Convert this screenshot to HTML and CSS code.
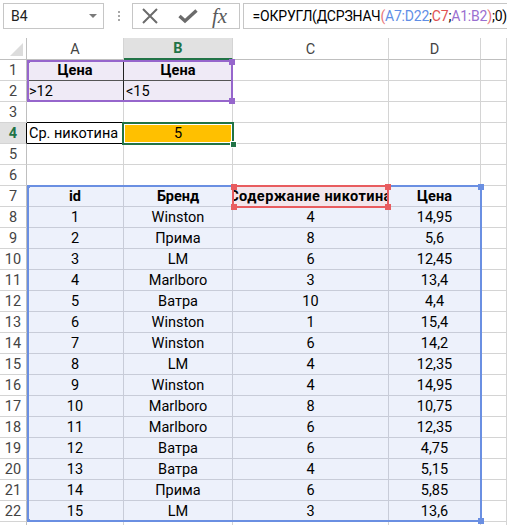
FILE: index.html
```html
<!DOCTYPE html>
<html lang="ru">
<head>
  <meta charset="UTF-8">
  <title>Средний никотин</title>
  <link rel="stylesheet" href="styles.css">
</head>
<body>

  <div class="formula-bar">
    <div class="name-box">
      <span class="name">B4</span>
      <span class="caret"></span>
    </div>
    <div class="grip"><i></i><i></i><i></i></div>
    <div class="buttons">
      <svg class="btn-x" width="18" height="16" viewBox="0 0 18 16">
        <path d="M2 1 L16 15 M16 1 L2 15" stroke="#6b6b6b" stroke-width="2" fill="none"/>
      </svg>
      <svg class="btn-ok" width="20" height="16" viewBox="0 0 20 16">
        <path d="M1.5 8 L7 13 L18.5 2.5" stroke="#6b6b6b" stroke-width="3.4" fill="none"/>
      </svg>
      <span class="fx">fx</span>
    </div>
    <div class="formula">=ОКРУГЛ(ДСРЗНАЧ<span class="paren">(</span><span class="ref-blue">A7:D22</span>;<span class="ref-red">C7</span>;<span class="ref-purple">A1:B2</span><span class="paren">)</span>;0)</div>
  </div>

  <div class="sheet">
    <div class="grid" id="grid"></div>

    <!-- range highlights drawn over the cells -->
    <div class="range range-purple">
      <span class="handle small tl"></span>
      <span class="handle tr"></span>
      <span class="handle small bl"></span>
      <span class="handle br"></span>
    </div>
    <div class="range range-blue">
      <span class="handle small tl"></span>
      <span class="handle tr"></span>
      <span class="handle small bl"></span>
      <span class="handle br"></span>
    </div>
    <div class="range range-red">
      <span class="handle tl"></span>
      <span class="handle tr"></span>
      <span class="handle bl"></span>
      <span class="handle br"></span>
    </div>
    <div class="active-cell"><span class="fill-handle"></span></div>
  </div>

  <script>
    const columns = ["A", "B", "C", "D", "E"];

    const data = [
      [1, "Winston", 4, "14,95"],
      [2, "Прима", 8, "5,6"],
      [3, "LM", 6, "12,45"],
      [4, "Marlboro", 3, "13,4"],
      [5, "Ватра", 10, "4,4"],
      [6, "Winston", 1, "15,4"],
      [7, "Winston", 6, "14,2"],
      [8, "LM", 4, "12,35"],
      [9, "Winston", 4, "14,95"],
      [10, "Marlboro", 8, "10,75"],
      [11, "Marlboro", 6, "12,35"],
      [12, "Ватра", 6, "4,75"],
      [13, "Ватра", 4, "5,15"],
      [14, "Прима", 6, "5,85"],
      [15, "LM", 3, "13,6"]
    ];

    const cells = {
      A1: { text: "Цена", cls: "crit bold center" },
      B1: { text: "Цена", cls: "crit bold center" },
      A2: { text: ">12", cls: "crit" },
      B2: { text: "<15", cls: "crit" },
      A3: { cls: "boxed-top" },
      A4: { text: "Ср. никотина", cls: "boxed" },
      B4: { text: "5", cls: "result center" },
      A7: { text: "id", cls: "tbl bold center" },
      B7: { text: "Бренд", cls: "tbl bold center" },
      C7: { text: "Содержание никотина", cls: "tbl crit-cell bold center" },
      D7: { text: "Цена", cls: "tbl bold center" }
    };

    data.forEach((row, i) => {
      row.forEach((value, c) => {
        cells[columns[c] + (i + 8)] = { text: String(value), cls: "tbl center" };
      });
    });

    const grid = document.getElementById("grid");

    function addCell(className, text) {
      const div = document.createElement("div");
      div.className = className;
      if (text) {
        const span = document.createElement("span");
        span.textContent = text;
        div.appendChild(span);
      }
      grid.appendChild(div);
    }

    // header row; column E is only a sliver, its letter sits off screen
    addCell("corner", "");
    columns.forEach(col => {
      addCell(col === "B" ? "col-head selected" : "col-head", col === "E" ? "" : col);
    });

    // row 23 only peeks in at the bottom edge, so it gets no label
    for (let r = 1; r <= 23; r++) {
      addCell(r === 4 ? "row-head selected" : "row-head", r < 23 ? String(r) : "");
      columns.forEach(col => {
        const cell = cells[col + r];
        addCell(cell ? "cell " + cell.cls : "cell", cell ? cell.text : "");
      });
    }
  </script>

</body>
</html>
```

FILE: styles.css
```css
body {
  margin: 0;
  width: 507px;
  height: 525px;
  overflow: hidden;
  background: #fff;
  font-family: Roboto, "Noto Sans", sans-serif;
  color: #000;
}

/* formula bar */

.formula-bar {
  display: flex;
  align-items: flex-start;
  height: 38px;
  padding: 3px 0 0 3px;
  box-sizing: border-box;
}

.name-box {
  display: flex;
  align-items: center;
  justify-content: space-between;
  width: 103px;
  height: 26px;
  padding: 0 6px 0 7px;
  box-sizing: border-box;
  border: 1px solid #c6c6c6;
  font-size: 14px;
  color: #222;
}

.caret {
  width: 0;
  height: 0;
  border-left: 4px solid transparent;
  border-right: 4px solid transparent;
  border-top: 4px solid #7a7a7a;
}

.grip {
  display: flex;
  flex-direction: column;
  gap: 2px;
  margin: 8px 0 0 14px;
}

.grip i {
  width: 2px;
  height: 2px;
  background: #a8a8a8;
}

.buttons {
  display: flex;
  align-items: center;
  width: 110px;
  height: 26px;
  margin-left: 12px;
  box-sizing: border-box;
  border: 1px solid #c6c6c6;
}

.btn-x { margin-left: 8px; }
.btn-ok { margin-left: 19px; }

.fx {
  margin-left: 14px;
  font-family: "Liberation Serif", serif;
  font-style: italic;
  font-size: 21px;
  color: #5a5a5a;
  line-height: 24px;
}

.formula {
  flex: 1;
  height: 26px;
  margin-left: 3px;
  padding-left: 9px;
  box-sizing: border-box;
  border: 1px solid #c6c6c6;
  border-right: none;
  font-size: 14px;
  line-height: 24px;
  white-space: nowrap;
  letter-spacing: -0.2px;
}

.paren { color: #e8757a; }
.ref-blue { color: #5f8ee6; }
.ref-red { color: #e05252; }
.ref-purple { color: #9a6fd0; }

/* sheet grid */

.sheet {
  position: relative;
}

.grid {
  display: grid;
  grid-template-columns: 27px 97px 109px 156px 92px 1fr;
  grid-template-rows: 22px;
  grid-auto-rows: 21px;
}

.grid > div {
  box-sizing: border-box;
  border-right: 1px solid #d4d4d4;
  border-bottom: 1px solid #d4d4d4;
  display: flex;
  align-items: center;
  overflow: hidden;
  white-space: nowrap;
  font-size: 14.5px;
  padding-top: 1px;
}

.corner {
  position: relative;
  border-right-color: #bfbfbf !important;
  border-bottom-color: #bfbfbf !important;
}

.corner::after {
  content: "";
  position: absolute;
  right: 3px;
  bottom: 3px;
  width: 0;
  height: 0;
  border-left: 13px solid transparent;
  border-bottom: 13px solid #dcdcdc;
}

.col-head {
  justify-content: center;
  color: #444;
  border-bottom-color: #bfbfbf !important;
}

.row-head {
  justify-content: center;
  color: #444;
  border-right-color: #bfbfbf !important;
}

.col-head.selected {
  background: #e1e1e1;
  color: #217346;
  font-weight: bold;
  border-bottom: 2px solid #217346 !important;
}

.row-head.selected {
  background: #e1e1e1;
  color: #217346;
  font-weight: bold;
  border-right-color: #000 !important;
}

.cell { padding-left: 2px; }

.center {
  justify-content: center;
  padding-left: 0;
}

.bold { font-weight: bold; }

.crit {
  background: #efeaf6;
  border-right-color: #222 !important;
  border-bottom-color: #555 !important;
}

.boxed-top { border-bottom-color: #000 !important; }
.boxed { border-bottom-color: #000 !important; }

.result { background: #ffc000; }

.tbl {
  background: #edf1fb;
  border-right-color: #c8ccd8 !important;
  border-bottom-color: #c8ccd8 !important;
}

.crit-cell {
  background: #f3e6ec;
  letter-spacing: 0.45px;
}

/* range highlights */

.range {
  position: absolute;
  box-sizing: border-box;
  border: 2px solid;
  pointer-events: none;
}

.range-purple {
  left: 27px;
  top: 22px;
  width: 206px;
  height: 42px;
  border-color: #9666cc;
}

.range-blue {
  left: 27px;
  top: 147px;
  width: 455px;
  height: 337px;
  border-color: #6a8fe2;
}

.range-red {
  left: 232px;
  top: 147px;
  width: 157px;
  height: 23px;
  border-color: #e85c5f;
}

.handle {
  position: absolute;
  width: 6px;
  height: 6px;
}

.range-purple .handle { background: #9666cc; }
.range-blue .handle { background: #6a8fe2; }
.range-red .handle { background: #e85c5f; }

.handle.tl { left: -3px; top: -3px; }
.handle.tr { right: -4px; top: -3px; }
.handle.bl { left: -3px; bottom: -4px; }
.handle.br { right: -4px; bottom: -4px; }

.handle.small {
  width: 3px;
  height: 3px;
}

.handle.small.tl { left: -2px; top: -2px; }
.handle.small.bl { left: -2px; bottom: -2px; }

.active-cell {
  position: absolute;
  left: 122px;
  top: 84px;
  width: 112px;
  height: 23px;
  box-sizing: border-box;
  border: 2px solid #217346;
  box-shadow: inset 0 0 0 1px #fff;
}

.fill-handle {
  position: absolute;
  right: -5px;
  bottom: -5px;
  width: 5px;
  height: 5px;
  background: #217346;
  border: 1px solid #fff;
}
```
